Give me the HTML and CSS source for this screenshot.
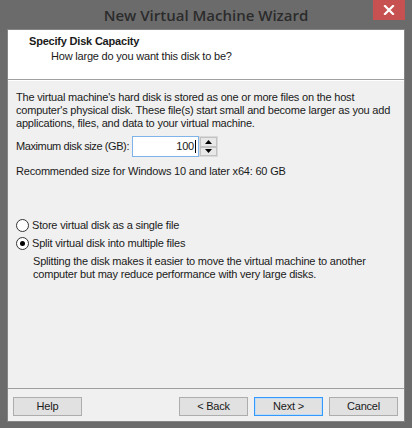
FILE: index.html
```html
<!DOCTYPE html>
<html>
<head>
<meta charset="utf-8">
<link rel="stylesheet" href="styles.css">
</head>
<body>
<div class="window">
  <div class="titlebar">
    <div class="title">New Virtual Machine Wizard</div>
    <div class="close">
      <svg width="12" height="10" viewBox="0 0 12 10"><path d="M2 1 L10 9 M10 1 L2 9" stroke="#fff" stroke-width="2.2" stroke-linecap="square"/></svg>
    </div>
  </div>
  <div class="client">
    <div class="header">
      <div class="h-title">Specify Disk Capacity</div>
      <div class="h-sub">How large do you want this disk to be?</div>
    </div>
    <div class="body">
      <p class="para">The virtual machine's hard disk is stored as one or more files on the host<br>computer's physical disk. These file(s) start small and become larger as you add<br>applications, files, and data to your virtual machine.</p>
      <div class="size-row">
        <span class="label">Maximum disk size (GB):</span>
        <div class="input">100<span class="caret"></span></div>
        <div class="spin">
          <div class="spin-btn"><svg width="7" height="4" viewBox="0 0 7 4"><path d="M0 4 L3.5 0 L7 4 Z" fill="#000"/></svg></div>
          <div class="spin-btn"><svg width="7" height="4" viewBox="0 0 7 4"><path d="M0 0 L3.5 4 L7 0 Z" fill="#000"/></svg></div>
        </div>
      </div>
      <div class="rec">Recommended size for Windows 10 and later x64: 60 GB</div>
      <div class="radios">
        <div class="radio-row"><span class="radio"></span><span>Store virtual disk as a single file</span></div>
        <div class="radio-row"><span class="radio checked"></span><span>Split virtual disk into multiple files</span></div>
        <div class="desc">Splitting the disk makes it easier to move the virtual machine to another<br>computer but may reduce performance with very large disks.</div>
      </div>
    </div>
    <div class="footer">
      <div class="btn">Help</div>
      <div class="spacer"></div>
      <div class="btn">&lt; Back</div>
      <div class="btn default">Next &gt;</div>
      <div class="btn">Cancel</div>
    </div>
  </div>
</div>
</body>
</html>
```
FILE: styles.css
```css
html, body {
  margin: 0;
  padding: 0;
  background: #6b6b6b;
}
.window {
  width: 412px;
  height: 428px;
  background: #6b6b6b;
  position: relative;
  display: flex;
  flex-direction: column;
  font-family: "Liberation Sans", Arial, sans-serif;
  font-size: 11px;
  letter-spacing: -0.2px;
  color: #1a1a1a;
}
.titlebar {
  height: 29px;
  display: flex;
  align-items: center;
  justify-content: center;
}
.title {
  font-family: "Open Sans", "Noto Sans", sans-serif;
  font-size: 15px;
  font-weight: 600;
  letter-spacing: 0;
  color: #2b2b2b;
  margin-top: 1px;
}
.close {
  position: absolute;
  top: 0;
  left: 373px;
  width: 32px;
  height: 20px;
  background: #c75050;
  display: flex;
  align-items: center;
  justify-content: center;
}
.client {
  margin: 0 7px;
  border: 1px solid #858585;
  height: 391px;
  background: #f0f0f0;
  display: flex;
  flex-direction: column;
}
.header {
  background: #fff;
  height: 50px;
  border-bottom: 1px solid #a0a0a0;
  box-shadow: 0 1px 0 #fff;
  box-sizing: border-box;
  padding: 5px 0 0 21px;
  line-height: 13px;
}
.h-title {
  font-weight: bold;
}
.h-sub {
  margin-top: 2px;
  padding-left: 22px;
}
.body {
  flex: 1;
  padding: 11px 0 0 8px;
  line-height: 13px;
  white-space: nowrap;
}
.para {
  margin: 0;
}
.size-row {
  display: flex;
  align-items: center;
  margin-top: 6px;
  height: 21px;
}
.label {
  flex: none;
  letter-spacing: -0.4px;
  margin-right: 3px;
}
.input {
  width: 63px;
  height: 19px;
  border: 1px solid #7eb4ea;
  background: #fff;
  box-sizing: content-box;
  padding-right: 2px;
  display: flex;
  justify-content: flex-end;
  align-items: center;
}
.caret {
  display: inline-block;
  width: 1px;
  height: 13px;
  background: #000;
  margin-left: 1px;
}
.spin {
  width: 17px;
  height: 19px;
  border: 1px solid #d9d9d9;
  background: #e6e6e6;
  display: flex;
  flex-direction: column;
}
.spin-btn {
  flex: 1;
  display: flex;
  align-items: center;
  justify-content: center;
  border: 1px solid #c2c2c2;
  background: #e8e8e8;
}
.rec {
  margin-top: 8px;
}
.radios {
  margin-top: 38px;
}
.radio-row {
  display: flex;
  align-items: center;
  height: 18px;
}
.radio {
  width: 11px;
  height: 11px;
  border: 1px solid #333;
  border-radius: 50%;
  background: #fff;
  margin-right: 3px;
  position: relative;
  box-sizing: content-box;
}
.radio.checked::after {
  content: "";
  position: absolute;
  left: 3px;
  top: 3px;
  width: 5px;
  height: 5px;
  border-radius: 50%;
  background: #000;
}
.desc {
  padding-left: 17px;
  margin-top: 3px;
}
.footer {
  border-top: 1px solid #a0a0a0;
  height: 33px;
  box-sizing: border-box;
  display: flex;
  align-items: flex-start;
  padding: 8px 6px 0 5px;
  gap: 6px;
}
.spacer {
  flex: 1;
}
.btn {
  width: 67px;
  height: 17px;
  border: 1px solid #adadad;
  background: #e1e1e1;
  text-align: center;
  line-height: 17px;
}
.btn.default {
  border-color: #3399ff;
  box-shadow: inset 0 0 0 1px #bfdcf7;
}
```
